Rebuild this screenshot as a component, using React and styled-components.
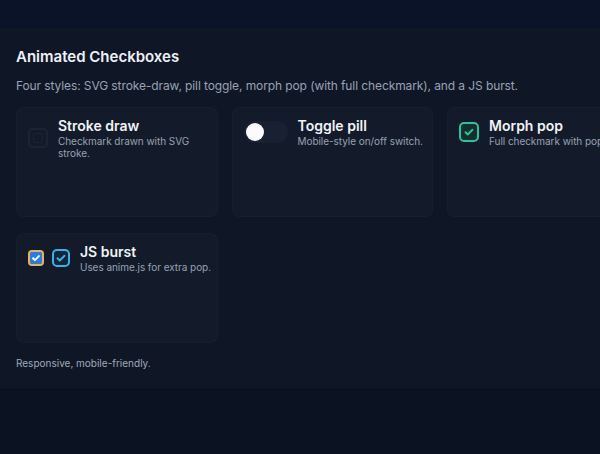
import React from 'react'
import styled, { createGlobalStyle } from 'styled-components'

const GlobalStyle = createGlobalStyle`
  html, body {
    margin: 0;
    padding: 0;
    background: #0b1221;
    font-family: Inter, "Noto Sans", sans-serif;
    overflow: hidden;
  }
`

const Check = ({ color, width = 2.4 }) => (
    <svg width="12" height="12" viewBox="0 0 24 24" fill="none">
        <path d="M5 12.5l4.5 4.5L19 7.5" stroke={color} strokeWidth={width * 1.6} strokeLinecap="round" strokeLinejoin="round" />
    </svg>
)

const cards = [
    { title: 'Stroke draw', desc: 'Checkmark drawn with SVG stroke.', kind: 'stroke' },
    { title: 'Toggle pill', desc: 'Mobile-style on/off switch.', kind: 'pill', nowrap: true },
    { title: 'Morph pop', desc: 'Full checkmark with pop animation.', kind: 'morph', nowrap: true },
    { title: 'JS burst', desc: 'Uses anime.js for extra pop.', kind: 'burst', nowrap: true },
]

const Control = ({ kind }) => {
    if (kind === 'stroke') return <StrokeBox><StrokeInner /></StrokeBox>
    if (kind === 'pill') return <Pill><Knob /></Pill>
    if (kind === 'morph') return <MorphBox><Check color="#2cc39a" /></MorphBox>
    return (
        <Controls>
            <NativeBox><Check color="#fff" width={3} /></NativeBox>
            <BurstBox><Check color="#3db0e4" /></BurstBox>
        </Controls>
    )
}

const App = () => {
    return (
        <Page>
            <GlobalStyle />
            <TopBar />
            <Panel>
                <Title>Animated Checkboxes</Title>
                <Subtitle>Four styles: SVG stroke-draw, pill toggle, morph pop (with full checkmark), and a JS burst.</Subtitle>
                <Grid>
                    {cards.map(c => (
                        <Card key={c.title}>
                            <Row>
                                <Control kind={c.kind} />
                                <Text>
                                    <CardTitle>{c.title}</CardTitle>
                                    <CardDesc nowrap={c.nowrap}>{c.desc}</CardDesc>
                                </Text>
                            </Row>
                        </Card>
                    ))}
                </Grid>
                <Footer>Responsive, mobile-friendly.</Footer>
            </Panel>
        </Page>
    )
}

export default App


const Page = styled.div`
    min-height: 454px;
    background: #0b1221;
`

const TopBar = styled.div`
    height: 28px;
    background: linear-gradient(180deg, #0a1329 0%, #091226 100%);
`

const Panel = styled.div`
    background: #0f1727;
    padding: 19px 16px 19px;
    overflow: hidden;
    box-shadow: 0 1px 0 rgba(0, 0, 0, 0.25);
`

const Title = styled.div`
    font-size: 15px;
    font-weight: 600;
    color: #eef1f6;
    line-height: 20px;
`

const Subtitle = styled.div`
    margin-top: 11px;
    font-size: 12px;
    letter-spacing: -0.1px;
    color: #99a2b2;
    line-height: 16px;
    white-space: nowrap;
`

const Grid = styled.div`
    margin-top: 13px;
    display: grid;
    grid-template-columns: repeat(3, 201.5px);
    column-gap: 14px;
    row-gap: 16px;
`

const Card = styled.div`
    background: #131b2b;
    border: 1px solid rgba(255, 255, 255, 0.02);
    border-radius: 8px;
    height: 110px;
    box-sizing: border-box;
    padding: 9px 7px 10px 11px;
`

const Row = styled.div`
    display: flex;
    align-items: center;
    gap: 10px;
`

const Controls = styled.div`
    display: flex;
    align-items: center;
    gap: 8px;
`

const Text = styled.div`
    display: flex;
    flex-direction: column;
    min-width: 0;
`

const CardTitle = styled.div`
    font-size: 14px;
    font-weight: 600;
    color: #f1f3f7;
    line-height: 18px;
`

const CardDesc = styled.div`
    font-size: 10px;
    letter-spacing: -0.05px;
    color: #98a1b0;
    line-height: 12px;
    white-space: ${p => p.nowrap ? 'nowrap' : 'normal'};
`

const StrokeBox = styled.div`
    flex: none;
    width: 20px;
    height: 20px;
    box-sizing: border-box;
    border: 2px solid #1c2434;
    border-radius: 5px;
    display: flex;
    align-items: center;
    justify-content: center;
`

const StrokeInner = styled.div`
    width: 8px;
    height: 8px;
    border: 1.5px solid #1b2332;
    border-radius: 2px;
`

const Pill = styled.div`
    flex: none;
    width: 44px;
    height: 22px;
    border-radius: 11px;
    background: #182031;
    display: flex;
    align-items: center;
    padding: 0 2px;
    box-sizing: border-box;
`

const Knob = styled.div`
    width: 18px;
    height: 18px;
    border-radius: 50%;
    background: #fbfbfd;
`

const MorphBox = styled.div`
    flex: none;
    width: 20px;
    height: 20px;
    box-sizing: border-box;
    border: 2px solid #2cc39a;
    border-radius: 5px;
    background: #13302f;
    display: flex;
    align-items: center;
    justify-content: center;
`

const NativeBox = styled.div`
    flex: none;
    width: 12px;
    height: 12px;
    border-radius: 2px;
    background: #2b7be6;
    outline: 2px solid #e8b45a;
    outline-offset: 0;
    margin: 0 2px;
    display: flex;
    align-items: center;
    justify-content: center;
    svg { width: 10px; height: 10px; }
`

const BurstBox = styled.div`
    flex: none;
    width: 18px;
    height: 18px;
    box-sizing: border-box;
    border: 2px solid #3db0e4;
    border-radius: 5px;
    background: #12253a;
    display: flex;
    align-items: center;
    justify-content: center;
`

const Footer = styled.div`
    margin-top: 13px;
    font-size: 10px;
    color: #a0a9b7;
    line-height: 14px;
`
